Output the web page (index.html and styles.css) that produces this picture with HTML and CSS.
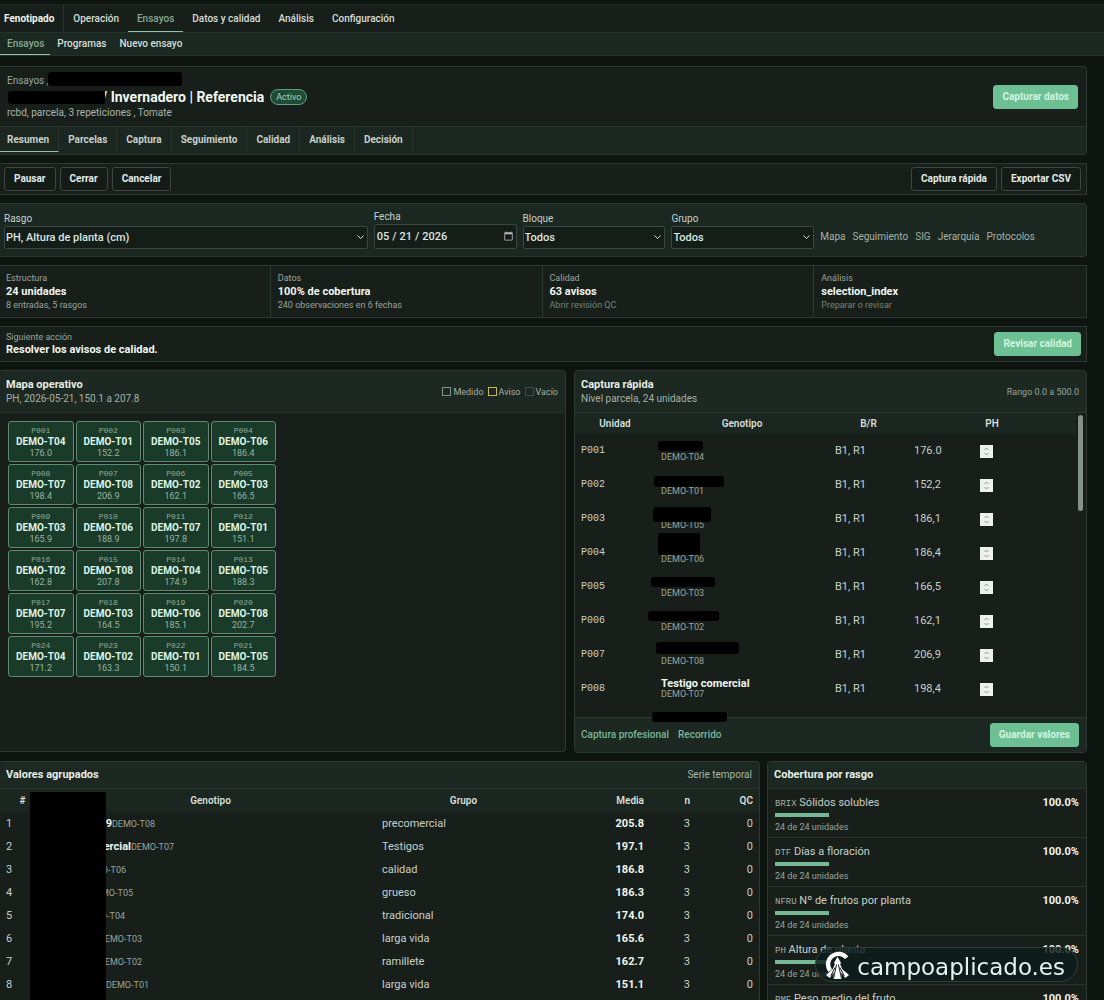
FILE: index.html
```html
<!DOCTYPE html>
<html lang="es">
<head>
<meta charset="utf-8">
<title>Fenotipado | Ensayos</title>
<link rel="stylesheet" href="styles.css">
</head>
<body>
<nav class="mainnav">
  <strong class="brand">Fenotipado</strong>
  <a href="#">Operación</a><a href="#" class="on">Ensayos</a><a href="#">Datos y calidad</a><a href="#">Análisis</a><a href="#">Configuración</a>
</nav>
<nav class="subnav"><a href="#" class="on">Ensayos</a><a href="#">Programas</a><a href="#">Nuevo ensayo</a></nav>

<main class="page">
  <header class="panel trial">
    <div class="trial-top">
      <div class="trial-info">
        <div class="crumbs">Ensayos ,<span class="mask mask-crumb"></span></div>
        <div class="title-row"><span class="mask mask-title"></span><h1>/ Invernadero | Referencia</h1><span class="badge">Activo</span></div>
        <div class="meta">rcbd, parcela, 3 repeticiones , Tomate</div>
      </div>
      <button class="btn primary">Capturar datos</button>
    </div>
    <nav class="tabs"><a href="#" class="on">Resumen</a><a href="#">Parcelas</a><a href="#">Captura</a><a href="#">Seguimiento</a><a href="#">Calidad</a><a href="#">Análisis</a><a href="#">Decisión</a></nav>
  </header>

  <section class="panel toolbar">
    <button class="btn">Pausar</button><button class="btn">Cerrar</button><button class="btn">Cancelar</button>
    <span class="spacer"></span>
    <button class="btn">Captura rápida</button><button class="btn">Exportar CSV</button>
  </section>

  <form class="panel filters">
    <div class="field"><label for="rasgo">Rasgo</label><select id="rasgo"><option>PH, Altura de planta (cm)</option></select></div>
    <div class="field"><label for="fecha">Fecha</label><input type="date" id="fecha" value="2026-05-21"></div>
    <div class="field"><label for="bloque">Bloque</label><select id="bloque"><option>Todos</option></select></div>
    <div class="field"><label for="grupo">Grupo</label><select id="grupo"><option>Todos</option></select></div>
    <div class="views"><a href="#">Mapa</a><a href="#">Seguimiento</a><a href="#">SIG</a><a href="#">Jerarquía</a><a href="#">Protocolos</a></div>
  </form>

  <section class="panel kpis">
    <div><small>Estructura</small><strong>24 unidades</strong><small>8 entradas, 5 rasgos</small></div>
    <div><small>Datos</small><strong>100% de cobertura</strong><small>240 observaciones en 6 fechas</small></div>
    <div><small>Calidad</small><strong>63 avisos</strong><a href="#">Abrir revisión QC</a></div>
    <div><small>Análisis</small><strong>selection_index</strong><a href="#">Preparar o revisar</a></div>
  </section>

  <section class="panel next">
    <div><small>Siguiente acción</small><strong>Resolver los avisos de calidad.</strong></div>
    <button class="btn primary">Revisar calidad</button>
  </section>

  <div class="work">
    <section class="panel map">
      <header class="head"><div><h2>Mapa operativo</h2><p>PH, 2026-05-21, 150.1 a 207.8</p></div>
        <div class="legend"><span class="ok">Medido</span><span class="warn">Aviso</span><span class="void">Vacío</span></div></header>
      <div class="plots">
        <button><small>P001</small><b>DEMO-T04</b><i>176.0</i></button>
        <button><small>P002</small><b>DEMO-T01</b><i>152.2</i></button>
        <button><small>P003</small><b>DEMO-T05</b><i>186.1</i></button>
        <button><small>P004</small><b>DEMO-T06</b><i>186.4</i></button>
        <button><small>P008</small><b>DEMO-T07</b><i>198.4</i></button>
        <button><small>P007</small><b>DEMO-T08</b><i>206.9</i></button>
        <button><small>P006</small><b>DEMO-T02</b><i>162.1</i></button>
        <button><small>P005</small><b>DEMO-T03</b><i>166.5</i></button>
        <button><small>P009</small><b>DEMO-T03</b><i>165.9</i></button>
        <button><small>P010</small><b>DEMO-T06</b><i>188.9</i></button>
        <button><small>P011</small><b>DEMO-T07</b><i>197.8</i></button>
        <button><small>P012</small><b>DEMO-T01</b><i>151.1</i></button>
        <button><small>P016</small><b>DEMO-T02</b><i>162.8</i></button>
        <button><small>P015</small><b>DEMO-T08</b><i>207.8</i></button>
        <button><small>P014</small><b>DEMO-T04</b><i>174.9</i></button>
        <button><small>P013</small><b>DEMO-T05</b><i>188.3</i></button>
        <button><small>P017</small><b>DEMO-T07</b><i>195.2</i></button>
        <button><small>P018</small><b>DEMO-T03</b><i>164.5</i></button>
        <button><small>P019</small><b>DEMO-T06</b><i>185.1</i></button>
        <button><small>P020</small><b>DEMO-T08</b><i>202.7</i></button>
        <button><small>P024</small><b>DEMO-T04</b><i>171.2</i></button>
        <button><small>P023</small><b>DEMO-T02</b><i>163.3</i></button>
        <button><small>P022</small><b>DEMO-T01</b><i>150.1</i></button>
        <button><small>P021</small><b>DEMO-T05</b><i>184.5</i></button>
      </div>
    </section>

    <section class="panel capture">
      <header class="head"><div><h2>Captura rápida</h2><p>Nivel parcela, 24 unidades</p></div><small>Rango 0.0 a 500.0</small></header>
      <div class="scroll">
        <table>
          <colgroup><col class="c-unit"><col class="c-geno"><col class="c-br"><col class="c-ph"></colgroup>
          <thead><tr><th>Unidad</th><th>Genotipo</th><th>B/R</th><th>PH</th></tr></thead>
          <tbody>
            <tr><td class="mono">P001</td><td class="geno"><span class="mask" style="left:3px;top:7px;width:45px;height:10px"></span><small>DEMO-T04</small></td><td>B1, R1</td><td><div class="num"><input aria-label="PH P001" value="176.0"><svg viewBox="0 0 13 13"><path d="M4.5 5 6.5 3 8.5 5M4.5 8 6.5 10 8.5 8"/></svg></div></td></tr>
            <tr><td class="mono">P002</td><td class="geno"><span class="mask" style="left:-1px;top:8px;width:70px;height:11px"></span><small>DEMO-T01</small></td><td>B1, R1</td><td><div class="num"><input aria-label="PH P002" value="152,2"><svg viewBox="0 0 13 13"><path d="M4.5 5 6.5 3 8.5 5M4.5 8 6.5 10 8.5 8"/></svg></div></td></tr>
            <tr><td class="mono">P003</td><td class="geno"><span class="mask" style="left:-2px;top:5px;width:58px;height:15px"></span><small>DEMO-T05</small></td><td>B1, R1</td><td><div class="num"><input aria-label="PH P003" value="186,1"><svg viewBox="0 0 13 13"><path d="M4.5 5 6.5 3 8.5 5M4.5 8 6.5 10 8.5 8"/></svg></div></td></tr>
            <tr><td class="mono">P004</td><td class="geno"><span class="mask" style="left:3px;top:-3px;width:42px;height:22px"></span><small>DEMO-T06</small></td><td>B1, R1</td><td><div class="num"><input aria-label="PH P004" value="186,4"><svg viewBox="0 0 13 13"><path d="M4.5 5 6.5 3 8.5 5M4.5 8 6.5 10 8.5 8"/></svg></div></td></tr>
            <tr><td class="mono">P005</td><td class="geno"><span class="mask" style="left:-4px;top:7px;width:64px;height:10px"></span><small>DEMO-T03</small></td><td>B1, R1</td><td><div class="num"><input aria-label="PH P005" value="166,5"><svg viewBox="0 0 13 13"><path d="M4.5 5 6.5 3 8.5 5M4.5 8 6.5 10 8.5 8"/></svg></div></td></tr>
            <tr><td class="mono">P006</td><td class="geno"><span class="mask" style="left:-7px;top:7px;width:71px;height:10px"></span><small>DEMO-T02</small></td><td>B1, R1</td><td><div class="num"><input aria-label="PH P006" value="162,1"><svg viewBox="0 0 13 13"><path d="M4.5 5 6.5 3 8.5 5M4.5 8 6.5 10 8.5 8"/></svg></div></td></tr>
            <tr><td class="mono">P007</td><td class="geno"><span class="mask" style="left:1px;top:4px;width:83px;height:12px"></span><small>DEMO-T08</small></td><td>B1, R1</td><td><div class="num"><input aria-label="PH P007" value="206,9"><svg viewBox="0 0 13 13"><path d="M4.5 5 6.5 3 8.5 5M4.5 8 6.5 10 8.5 8"/></svg></div></td></tr>
            <tr><td class="mono">P008</td><td class="geno"><b>Testigo comercial</b><small>DEMO-T07</small></td><td>B1, R1</td><td><div class="num"><input aria-label="PH P008" value="198,4"><svg viewBox="0 0 13 13"><path d="M4.5 5 6.5 3 8.5 5M4.5 8 6.5 10 8.5 8"/></svg></div></td></tr>
          </tbody>
        </table>
        <span class="thumb"></span>
      </div>
      <footer class="foot"><span class="mask mask-foot"></span><a href="#">Captura profesional</a><a href="#">Recorrido</a><span class="spacer"></span><button class="btn primary">Guardar valores</button></footer>
    </section>
  </div>

  <div class="results">
    <section class="panel grouped">
      <header class="head slim"><h2>Valores agrupados</h2><a href="#">Serie temporal</a></header>
      <span class="mask mask-names"></span>
      <table>
        <colgroup><col class="g-n"><col class="g-geno"><col class="g-group"><col class="g-mean"><col class="g-count"><col class="g-qc"></colgroup>
        <thead><tr><th>#</th><th>Genotipo</th><th>Grupo</th><th class="r">Media</th><th class="r">n</th><th class="r">QC</th></tr></thead>
        <tbody>
          <tr><td>1</td><td><div class="name" style="width:104px"><b>9</b><small>DEMO-T08</small></div></td><td>precomercial</td><td class="r"><b>205.8</b></td><td class="r">3</td><td class="r">0</td></tr>
          <tr><td>2</td><td><div class="name" style="width:123px"><b>comercial</b><small>DEMO-T07</small></div></td><td>Testigos</td><td class="r"><b>197.1</b></td><td class="r">3</td><td class="r">0</td></tr>
          <tr><td>3</td><td><div class="name" style="width:75px"><small>DEMO-T06</small></div></td><td>calidad</td><td class="r"><b>186.8</b></td><td class="r">3</td><td class="r">0</td></tr>
          <tr><td>4</td><td><div class="name" style="width:82px"><small>DEMO-T05</small></div></td><td>grueso</td><td class="r"><b>186.3</b></td><td class="r">3</td><td class="r">0</td></tr>
          <tr><td>5</td><td><div class="name" style="width:74px"><small>DEMO-T04</small></div></td><td>tradicional</td><td class="r"><b>174.0</b></td><td class="r">3</td><td class="r">0</td></tr>
          <tr><td>6</td><td><div class="name" style="width:91px"><small>DEMO-T03</small></div></td><td>larga vida</td><td class="r"><b>165.6</b></td><td class="r">3</td><td class="r">0</td></tr>
          <tr><td>7</td><td><div class="name" style="width:91px"><small>DEMO-T02</small></div></td><td>ramillete</td><td class="r"><b>162.7</b></td><td class="r">3</td><td class="r">0</td></tr>
          <tr><td>8</td><td><div class="name" style="width:98px"><small>DEMO-T01</small></div></td><td>larga vida</td><td class="r"><b>151.1</b></td><td class="r">3</td><td class="r">0</td></tr>
        </tbody>
      </table>
    </section>

    <section class="panel coverage">
      <header class="head slim"><h2>Cobertura por rasgo</h2></header>
      <div class="item"><div class="row"><span><code>BRIX</code> Sólidos solubles</span><b>100.0%</b></div><div class="meter"></div><small>24 de 24 unidades</small></div>
      <div class="item"><div class="row"><span><code>DTF</code> Días a floración</span><b>100.0%</b></div><div class="meter"></div><small>24 de 24 unidades</small></div>
      <div class="item"><div class="row"><span><code>NFRU</code> Nº de frutos por planta</span><b>100.0%</b></div><div class="meter"></div><small>24 de 24 unidades</small></div>
      <div class="item"><div class="row"><span><code>PH</code> Altura de planta</span><b>100.0%</b></div><div class="meter"></div><small>24 de 24 unidades</small></div>
      <div class="item"><div class="row"><span><code>PMF</code> Peso medio del fruto</span><b>100.0%</b></div><div class="meter"></div><small>24 de 24 unidades</small></div>
    </section>
  </div>
</main>

<a href="#" class="site">
  <svg viewBox="0 0 26 30"><path d="M5.500 21.500A10 10 0 1 1 22.500 8" fill="none" stroke="#fff" stroke-width="4.500"/><path d="M13 7 17 14 15.500 14 18 20 25 26 21 29 17 23 17 30 9 30 9 23 5 29 1 26 8 20 10.500 14 9 14Z" fill="#fff"/><path d="M12 15 9 29M14 15 17 29M10.500 18 6 27M15.500 18 20 27" stroke="#12201d" stroke-width="1" fill="none"/></svg>
  <span>campoaplicado.es</span>
</a>
</body>
</html>
```
FILE: styles.css
```css
* { box-sizing: border-box; }
html { color-scheme: dark; background: #0e1410; }
body { margin: 0; height: 100vh; overflow: hidden; padding-top: 4px; font: 11px/14px Roboto, sans-serif; color: #c6d0c9; }
a { color: inherit; text-decoration: none; }
h1, h2, p { margin: 0; }
button, input, select { font: inherit; color: inherit; }
small { font-size: 9px; line-height: 12px; color: #98a49c; }
b, strong { color: #eff6f1; }
.spacer { flex: 1; }
.mask { position: absolute; background: #000; border-radius: 3px; z-index: 2; }

.mainnav { display: flex; height: 28px; align-items: stretch; background: #181f1b; border-top: 1px solid #1f2823; font-size: 10px; }
.mainnav > * { line-height: 28px; padding: 0 9px; }
.mainnav .brand { padding: 0 9px 0 4px; border-right: 1px solid #28332c; }
.mainnav a, .subnav a { font-weight: 500; color: #d5ded8; }
.mainnav a.on, .subnav a.on, .tabs a.on { border-bottom: 1px solid #8fc4a6; }
.mainnav a.on, .subnav a.on { color: #83aa92; }
.subnav { display: flex; height: 24px; background: #1c2922; border-top: 1px solid #25332b; border-bottom: 1px solid #25332b; font-size: 10px; }
.subnav a { line-height: 22px; padding: 0 6px 0 7px; }

.page { display: flex; flex-direction: column; gap: 8px; padding: 10px 17px 0 0; }
.panel { background: #181f1b; border: 1px solid #2d3932; border-left: 0; border-radius: 0 4px 4px 0; position: relative; }

.btn { height: 24px; padding: 0 9px; border: 1px solid #3b4740; border-radius: 3px; background: #151c18; font-size: 10px; font-weight: 700; color: #e3ebe5; white-space: nowrap; }
.btn.primary { background: #6dbf94; border-color: #6dbf94; color: #d2f6df; padding: 0 8px; }

.trial-top { display: flex; align-items: center; justify-content: space-between; padding: 7px 8px 6px 7px; height: 59px; }
.crumbs { font-size: 10px; color: #9aa69e; position: relative; }
.mask-crumb { left: 41px; top: -2px; width: 134px; height: 14px; }
.title-row { display: flex; align-items: center; gap: 6px; height: 18px; padding-left: 95px; position: relative; }
.mask-title { left: 1px; top: 3px; width: 97px; height: 13px; }
h1 { font-size: 14px; line-height: 18px; color: #f1f7f3; }
.badge { border: 1px solid #5f9f7d; border-radius: 9px; background: #1f4a35; color: #a8d5bb; font-size: 9px; line-height: 14px; padding: 0 5px; }
.meta { font-size: 10px; color: #a9b5ad; }
.tabs { display: flex; height: 28px; border-top: 1px solid #2a362f; background: #1c2721; border-radius: 0 0 4px 0; font-size: 10px; }
.tabs a { font-weight: 700; line-height: 26px; padding: 0 9px; border-right: 1px solid #27322b; height: 25px; }
.tabs a.on { padding-left: 7px; }

.toolbar { display: flex; align-items: center; gap: 4px; padding: 0 5px 0 4px; height: 32px; border-radius: 0; }

.filters { display: grid; grid-template-columns: 364fr 143fr 143fr 143fr 266fr; gap: 6px; align-items: end; height: 54px; padding: 0 0 7px 4px; background: #1b2821; }
.field { display: flex; flex-direction: column; min-width: 0; }
.field label { font-size: 10px; line-height: 14px; }
.field select, .field input { width: 100%; height: 23px; padding: 0 0 0 1px; border: 1px solid #3a4740; border-radius: 2px; background: #151d18; font-weight: 500; color: #dde6e0; }
.field select { appearance: none; background: #151d18 url("data:image/svg+xml,%3Csvg xmlns='http://www.w3.org/2000/svg' width='7' height='5' fill='none' stroke='%23dde6e0'%3E%3Cpath d='M.5 .5 3.500 3.500 6.500 .5'/%3E%3C/svg%3E") no-repeat right 3px center; }
.field input { height: 25px; }
.field ::-webkit-datetime-edit-text { padding: 0 2px; }
.field ::-webkit-calendar-picker-indicator { opacity: .7; }
.views { display: flex; gap: 7px; font-size: 10px; line-height: 24px; color: #a4b1a8; }

.kpis { display: grid; grid-template-columns: 270fr 272fr 272fr 273fr; height: 53px; border-radius: 0; }
.kpis > div { display: flex; flex-direction: column; padding: 6px 7px; border-left: 1px solid #2d3932; }
.kpis > div:first-child { border-left: 0; padding-left: 6px; }
.kpis small, .kpis a { font-size: 9px; line-height: 13px; }
.kpis a { color: #74867a; }

.next { display: flex; align-items: center; justify-content: space-between; height: 36px; padding: 0 5px 0 6px; border-radius: 0; }
.next > div { display: flex; flex-direction: column; }

.work { display: grid; grid-template-columns: 566fr 513fr; gap: 8px; }
.work .panel, .results .panel { border-radius: 4px; border-left: 1px solid #2d3932; }
.work .map, .results .grouped { border-left: 0; border-radius: 0 4px 4px 0; }
.head { display: flex; align-items: center; justify-content: space-between; height: 42px; padding: 0 7px 0 6px; background: #1c2821; border-bottom: 1px solid #27332c; border-radius: 4px 4px 0 0; }
h2 { font-size: 11px; line-height: 14px; color: #e6eee8; }
.head p { font-size: 10px; color: #a4b1a8; }
.head.slim { height: 27px; }
.head.slim a { font-size: 10px; color: #a4b9ac; }
.legend { display: flex; gap: 4px; font-size: 9px; color: #a4b1a8; }
.legend span { display: flex; align-items: center; gap: 2px; }
.legend span::before { content: ""; width: 7px; height: 7px; border: 1px solid #7d9488; }
.legend .warn::before { border-color: #c2bb5e; }
.legend .void::before { border-color: #3f4d45; }
.map { height: 382px; }
.plots { display: grid; grid-template-columns: repeat(4, 1fr); grid-auto-rows: 41px; gap: 2px; width: 268px; margin: 8px; }
.plots button { display: flex; flex-direction: column; align-items: center; justify-content: center; padding: 0; border: 1px solid #5d8a70; border-radius: 3px; background: #1b3b2a; }
.plots small { font: 8px/11px "Liberation Mono", monospace; color: #8fac9b; }
.plots b { font-size: 10px; line-height: 12px; color: #dff5e7; }
.plots i { font-style: normal; font-size: 9px; line-height: 11px; color: #95b3a1; }

table { width: 100%; border-collapse: collapse; table-layout: fixed; }
th { font-size: 10px; font-weight: 600; text-align: center; padding: 0 6px; color: #d5dfd8; background: #1b2620; }
td { padding: 0 6px; text-align: left; }
.r { text-align: right; }
.capture { display: flex; flex-direction: column; }
.scroll { position: relative; height: 304px; padding-right: 10px; overflow: hidden; }
.capture th { height: 21px; }
.capture td { height: 34px; }
.c-unit { width: 80px; } .c-geno { width: 174px; } .c-br { width: 79px; }
.mono { font-family: "Liberation Mono", monospace; font-size: 10px; }
.geno { position: relative; line-height: 11px; }
.geno small, .geno b { display: block; line-height: 11px; }
.geno small { padding-top: 13px; }
.geno b + small { padding-top: 0; }
.num { display: flex; align-items: center; width: 79px; }
.num input { flex: 1; min-width: 0; border: 0; padding: 0; background: none; }
.num svg { width: 13px; height: 13px; background: #eef0ee; fill: none; stroke: #8d938f; }
.thumb { position: absolute; right: 3px; top: 2px; width: 5px; height: 96px; border-radius: 3px; background: #85908a; }
.foot { position: relative; display: flex; align-items: center; gap: 9px; height: 35px; padding: 0 7px 0 6px; border-top: 1px solid #2d3932; background: #1c2821; font-size: 10px; font-weight: 500; color: #79b898; border-radius: 0 0 4px 4px; }
.mask-foot { left: 77px; top: -6px; width: 75px; height: 10px; }

.results { display: grid; grid-template-columns: 760fr 320fr; gap: 7px; }
.grouped th, .grouped td { height: 23px; }
.g-n { width: 45px; } .g-geno { width: 331px; } .g-group { width: 175px; } .g-mean { width: 99px; } .g-count { width: 46px; }
.mask-names { left: 30px; top: 30px; width: 76px; bottom: 0; border-radius: 0; }
.name { display: flex; justify-content: flex-end; align-items: baseline; }
.grouped { min-height: 240px; }
.item { height: 49px; padding: 6px 7px 0; border-bottom: 1px solid #2b362f; display: flex; flex-direction: column; }
.row { display: flex; justify-content: space-between; line-height: 15px; }
code { font: 9px "Liberation Mono", monospace; color: #a4b1a8; }
.meter { width: 54px; height: 4px; margin: 3px 0 4px; background: #74b896; }

.site { position: fixed; right: 26px; bottom: 18px; display: flex; align-items: center; gap: 7px; height: 35px; padding: 0 12px 0 9px; border: 1px solid #2c4039; border-radius: 18px; background: rgba(13, 27, 28, .8); font: 23px/28px "DejaVu Sans", sans-serif; color: #e6f3ee; z-index: 5; }
.site span { padding-top: 4px; }
.site svg { width: 25px; height: 29px; }
```
